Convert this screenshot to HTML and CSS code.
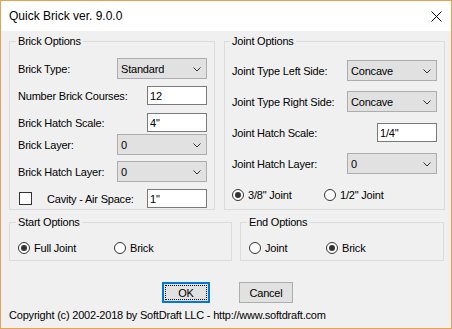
FILE: index.html
```html
<!DOCTYPE html>
<html lang="en">
<head>
    <meta charset="UTF-8">
    <title>Quick Brick ver. 9.0.0</title>
    <link rel="stylesheet" href="styles.css">
</head>
<body>
    <div class="window">
        <!-- Title bar -->
        <div class="titlebar">
            <span class="title">Quick Brick ver. 9.0.0</span>
            <svg class="close" width="11" height="11" viewBox="0 0 11 11">
                <path d="M0.5 0.5 L10.5 10.5 M10.5 0.5 L0.5 10.5" stroke="#000" stroke-width="1" fill="none"/>
            </svg>
        </div>

        <div class="client">
            <div class="top-row">
                <fieldset class="group brick">
                    <legend>Brick Options</legend>
                    <div class="row">
                        <label>Brick Type:</label>
                        <div class="combo">Standard<span class="chev"><svg width="8" height="5" viewBox="0 0 8 5"><path d="M0.5 0.5 L4 4 L7.5 0.5" stroke="#333" fill="none"/></svg></span></div>
                    </div>
                    <div class="row">
                        <label>Number Brick Courses:</label>
                        <input class="text" type="text" value="12">
                    </div>
                    <div class="row">
                        <label>Brick Hatch Scale:</label>
                        <input class="text" type="text" value='4"'>
                    </div>
                    <div class="row row-tight">
                        <label>Brick Layer:</label>
                        <div class="combo">0<span class="chev"><svg width="8" height="5" viewBox="0 0 8 5"><path d="M0.5 0.5 L4 4 L7.5 0.5" stroke="#333" fill="none"/></svg></span></div>
                    </div>
                    <div class="row">
                        <label>Brick Hatch Layer:</label>
                        <div class="combo">0<span class="chev"><svg width="8" height="5" viewBox="0 0 8 5"><path d="M0.5 0.5 L4 4 L7.5 0.5" stroke="#333" fill="none"/></svg></span></div>
                    </div>
                    <div class="row">
                        <label class="check"><span class="box"></span>Cavity - Air Space:</label>
                        <input class="text" type="text" value='1"'>
                    </div>
                </fieldset>

                <fieldset class="group joint">
                    <legend>Joint Options</legend>
                    <div class="row">
                        <label>Joint Type Left Side:</label>
                        <div class="combo">Concave<span class="chev"><svg width="8" height="5" viewBox="0 0 8 5"><path d="M0.5 0.5 L4 4 L7.5 0.5" stroke="#333" fill="none"/></svg></span></div>
                    </div>
                    <div class="row">
                        <label>Joint Type Right Side:</label>
                        <div class="combo">Concave<span class="chev"><svg width="8" height="5" viewBox="0 0 8 5"><path d="M0.5 0.5 L4 4 L7.5 0.5" stroke="#333" fill="none"/></svg></span></div>
                    </div>
                    <div class="row">
                        <label>Joint Hatch Scale:</label>
                        <input class="text" type="text" value='1/4"'>
                    </div>
                    <div class="row">
                        <label>Joint Hatch Layer:</label>
                        <div class="combo">0<span class="chev"><svg width="8" height="5" viewBox="0 0 8 5"><path d="M0.5 0.5 L4 4 L7.5 0.5" stroke="#333" fill="none"/></svg></span></div>
                    </div>
                    <div class="row radios">
                        <span class="radio w92 checked"><span class="dot"></span>3/8" Joint</span>
                        <span class="radio"><span class="dot"></span>1/2" Joint</span>
                    </div>
                </fieldset>
            </div>

            <div class="bottom-row">
                <fieldset class="group start">
                    <legend>Start Options</legend>
                    <div class="radios">
                        <span class="radio w96 checked"><span class="dot"></span>Full Joint</span>
                        <span class="radio"><span class="dot"></span>Brick</span>
                    </div>
                </fieldset>
                <fieldset class="group end">
                    <legend>End Options</legend>
                    <div class="radios">
                        <span class="radio w77"><span class="dot"></span>Joint</span>
                        <span class="radio checked"><span class="dot"></span>Brick</span>
                    </div>
                </fieldset>
            </div>

            <div class="buttons">
                <button class="btn default">OK</button>
                <button class="btn cancel">Cancel</button>
            </div>

            <p class="copyright">Copyright (c) 2002-2018 by SoftDraft LLC - http://www.softdraft.com</p>
        </div>
    </div>
</body>
</html>
```

FILE: styles.css
```css
* {
    margin: 0;
    padding: 0;
    box-sizing: border-box;
}

body {
    background: #ffffff;
    font-family: 'Liberation Sans', Arial, sans-serif;
    font-size: 11px;
    letter-spacing: -0.2px;
    color: #000;
}

.window {
    width: 452px;
    height: 329px;
    border: 1px solid #e7a250;
    display: flex;
    flex-direction: column;
}

.titlebar {
    height: 30px;
    background: #fff;
    display: flex;
    align-items: center;
    justify-content: space-between;
    padding: 0 9px 0 8px;
}

.title {
    font-size: 12px;
    letter-spacing: 0;
}

.close {
    display: block;
    margin-top: 1px;
}

.client {
    flex: 1;
    background: #f0f0f0;
    padding: 4px 0 0 8px;
    display: flex;
    flex-direction: column;
}

/* group boxes */
.group {
    border: 1px solid #dcdcdc;
    min-width: 0;
    display: flex;
    flex-direction: column;
}

.group legend {
    line-height: 13px;
    padding: 0 2px;
    margin-left: -2px;
}

.top-row {
    display: flex;
    gap: 9px;
}

.brick {
    width: 206px;
    height: 175px;
    padding: 10px 7px 0 8px;
    gap: 6px;
}

.joint {
    width: 221px;
    height: 175px;
    padding: 12px 7px 0 7px;
    gap: 10px;
}

.row {
    height: 21px;
    display: flex;
    align-items: center;
    justify-content: space-between;
}

.brick .row-tight {
    margin-top: -5px;
}

.combo {
    width: 90px;
    height: 21px;
    background: #e1e1e1;
    border: 1px solid #adadad;
    display: flex;
    align-items: center;
    justify-content: space-between;
    padding: 0 5px 0 3px;
}

.chev {
    display: flex;
    margin-top: 1px;
}

.text {
    width: 60px;
    height: 19px;
    border: 1px solid #7a7a7a;
    background: #fff;
    font-family: inherit;
    font-size: 11px;
    letter-spacing: inherit;
    padding: 0 2px;
    outline: none;
}

.check {
    display: flex;
    align-items: center;
    gap: 15px;
    padding-left: 1px;
}

.box {
    width: 13px;
    height: 13px;
    border: 1px solid #333;
    background: #fff;
}

/* radio buttons */
.radios {
    display: flex;
    align-items: center;
    justify-content: flex-start;
}

.radio {
    display: flex;
    align-items: center;
    gap: 4px;
}

.radio .dot {
    width: 12px;
    height: 12px;
    border: 1px solid #333;
    border-radius: 50%;
    background: #fff;
    display: flex;
    align-items: center;
    justify-content: center;
}

.radio.checked .dot::after {
    content: '';
    width: 6px;
    height: 6px;
    border-radius: 50%;
    background: #333;
}

.w92 { width: 92px; }
.w96 { width: 96px; }
.w77 { width: 77px; }

.bottom-row {
    display: flex;
    gap: 8px;
    margin-top: 6px;
}

.start, .end {
    height: 45px;
    padding: 12px 8px 0 8px;
}

.start { width: 223px; }
.end { width: 204px; }

.start .radios, .end .radios {
    height: 14px;
}

/* dialog buttons */
.buttons {
    display: flex;
    gap: 29px;
    margin-top: 21px;
    padding-left: 153px;
}

.btn {
    height: 21px;
    font-family: inherit;
    font-size: 11px;
    letter-spacing: inherit;
    color: #000;
    background: #e1e1e1;
    border: 1px solid #adadad;
}

.btn.default {
    width: 48px;
    border: 2px solid #0078d7;
    outline: 1px dotted #000;
    outline-offset: -4px;
}

.btn.cancel {
    width: 54px;
}

.copyright {
    margin-top: 6px;
    line-height: 13px;
}
```
